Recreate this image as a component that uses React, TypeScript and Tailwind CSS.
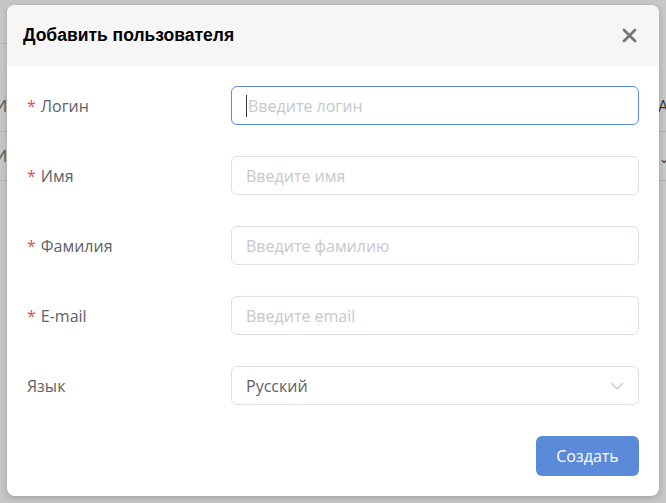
import React from "react";

const font = { fontFamily: '"Segoe UI", "Open Sans", "Noto Sans", sans-serif' };

function Row({ label, required, placeholder, focused, select }: { label: string; required?: boolean; placeholder?: string; focused?: boolean; select?: boolean }) {
  return (
    <div className="flex items-center h-[39px]">
      <div className="w-[204px] flex items-center text-[16px] text-[#606266]">
        {required && <span className="text-[#f0435a] mr-[5px]">*</span>}
        <span>{label}</span>
      </div>
      <div
        className={
          "flex-1 h-[39px] rounded-[6px] border flex items-center px-[14px] text-[16px] " +
          (focused ? "border-[#5b8ae0]" : "border-[#dcdfe6]")
        }
      >
        {focused && <span className="w-px h-[22px] bg-[#333] mr-[1px]" />}
        {select ? (
          <>
            <span className="flex-1 text-[#606266]">Русский</span>
            <svg width="14" height="10" viewBox="0 0 14 10" fill="none">
              <path d="M1 2l6 6 6-6" stroke="#c0c4cc" strokeWidth="1.2" />
            </svg>
          </>
        ) : (
          <span className="text-[#c6c8cc]">{placeholder}</span>
        )}
      </div>
    </div>
  );
}

export default function App() {
  return (
    <div className="relative w-[666px] h-[503px] bg-[#c6c6c6] overflow-hidden" style={font}>
      <div className="absolute left-0 top-[43px] w-[7px] h-px bg-[#b0b0b0]" />
      <div className="absolute left-0 top-[131px] w-[7px] h-px bg-[#b0b0b0]" />
      <div className="absolute left-0 top-[180px] w-[7px] h-px bg-[#b0b0b0]" />
      <div className="absolute right-0 top-[131px] w-[7px] h-px bg-[#b0b0b0]" />
      <div className="absolute right-0 top-[180px] w-[7px] h-px bg-[#b0b0b0]" />
      <div className="absolute left-[-5px] top-[94px] text-[16px] text-[#555]">И</div>
      <div className="absolute left-[-5px] top-[144px] text-[16px] text-[#555]">И</div>
      <div className="absolute left-[658px] top-[94px] text-[16px] text-[#333]">A</div>
      <div className="absolute left-[659px] top-[150px] text-[12px] text-[#333]">⌄</div>

      <div className="absolute left-[7px] top-[5px] w-[652px] h-[491px] bg-white rounded-[8px] overflow-hidden shadow-[0_2px_6px_rgba(0,0,0,0.18)] flex flex-col">
        <div className="h-[61px] bg-[#f6f6f6] flex items-center justify-between pl-[16px] pr-[22px]">
          <span className="text-[17.5px] font-bold text-black" style={{ fontFamily: '"Liberation Sans", Arial, sans-serif' }}>
            Добавить пользователя
          </span>
          <svg width="15" height="15" viewBox="0 0 15 15">
            <path d="M2 2l11 11M13 2L2 13" stroke="#777" strokeWidth="2.8" strokeLinecap="round" />
          </svg>
        </div>
        <div className="flex flex-col gap-[31px] pt-[20px] pl-[20px] pr-[20px]">
          <Row label="Логин" required placeholder="Введите логин" focused />
          <Row label="Имя" required placeholder="Введите имя" />
          <Row label="Фамилия" required placeholder="Введите фамилию" />
          <Row label="E-mail" required placeholder="Введите email" />
          <Row label="Язык" select />
        </div>
        <div className="flex justify-end pr-[20px] pt-[31px]">
          <button className="w-[103px] h-[40px] rounded-[6px] bg-[#5b8ad8] text-white text-[16px]">Создать</button>
        </div>
      </div>
    </div>
  );
}
